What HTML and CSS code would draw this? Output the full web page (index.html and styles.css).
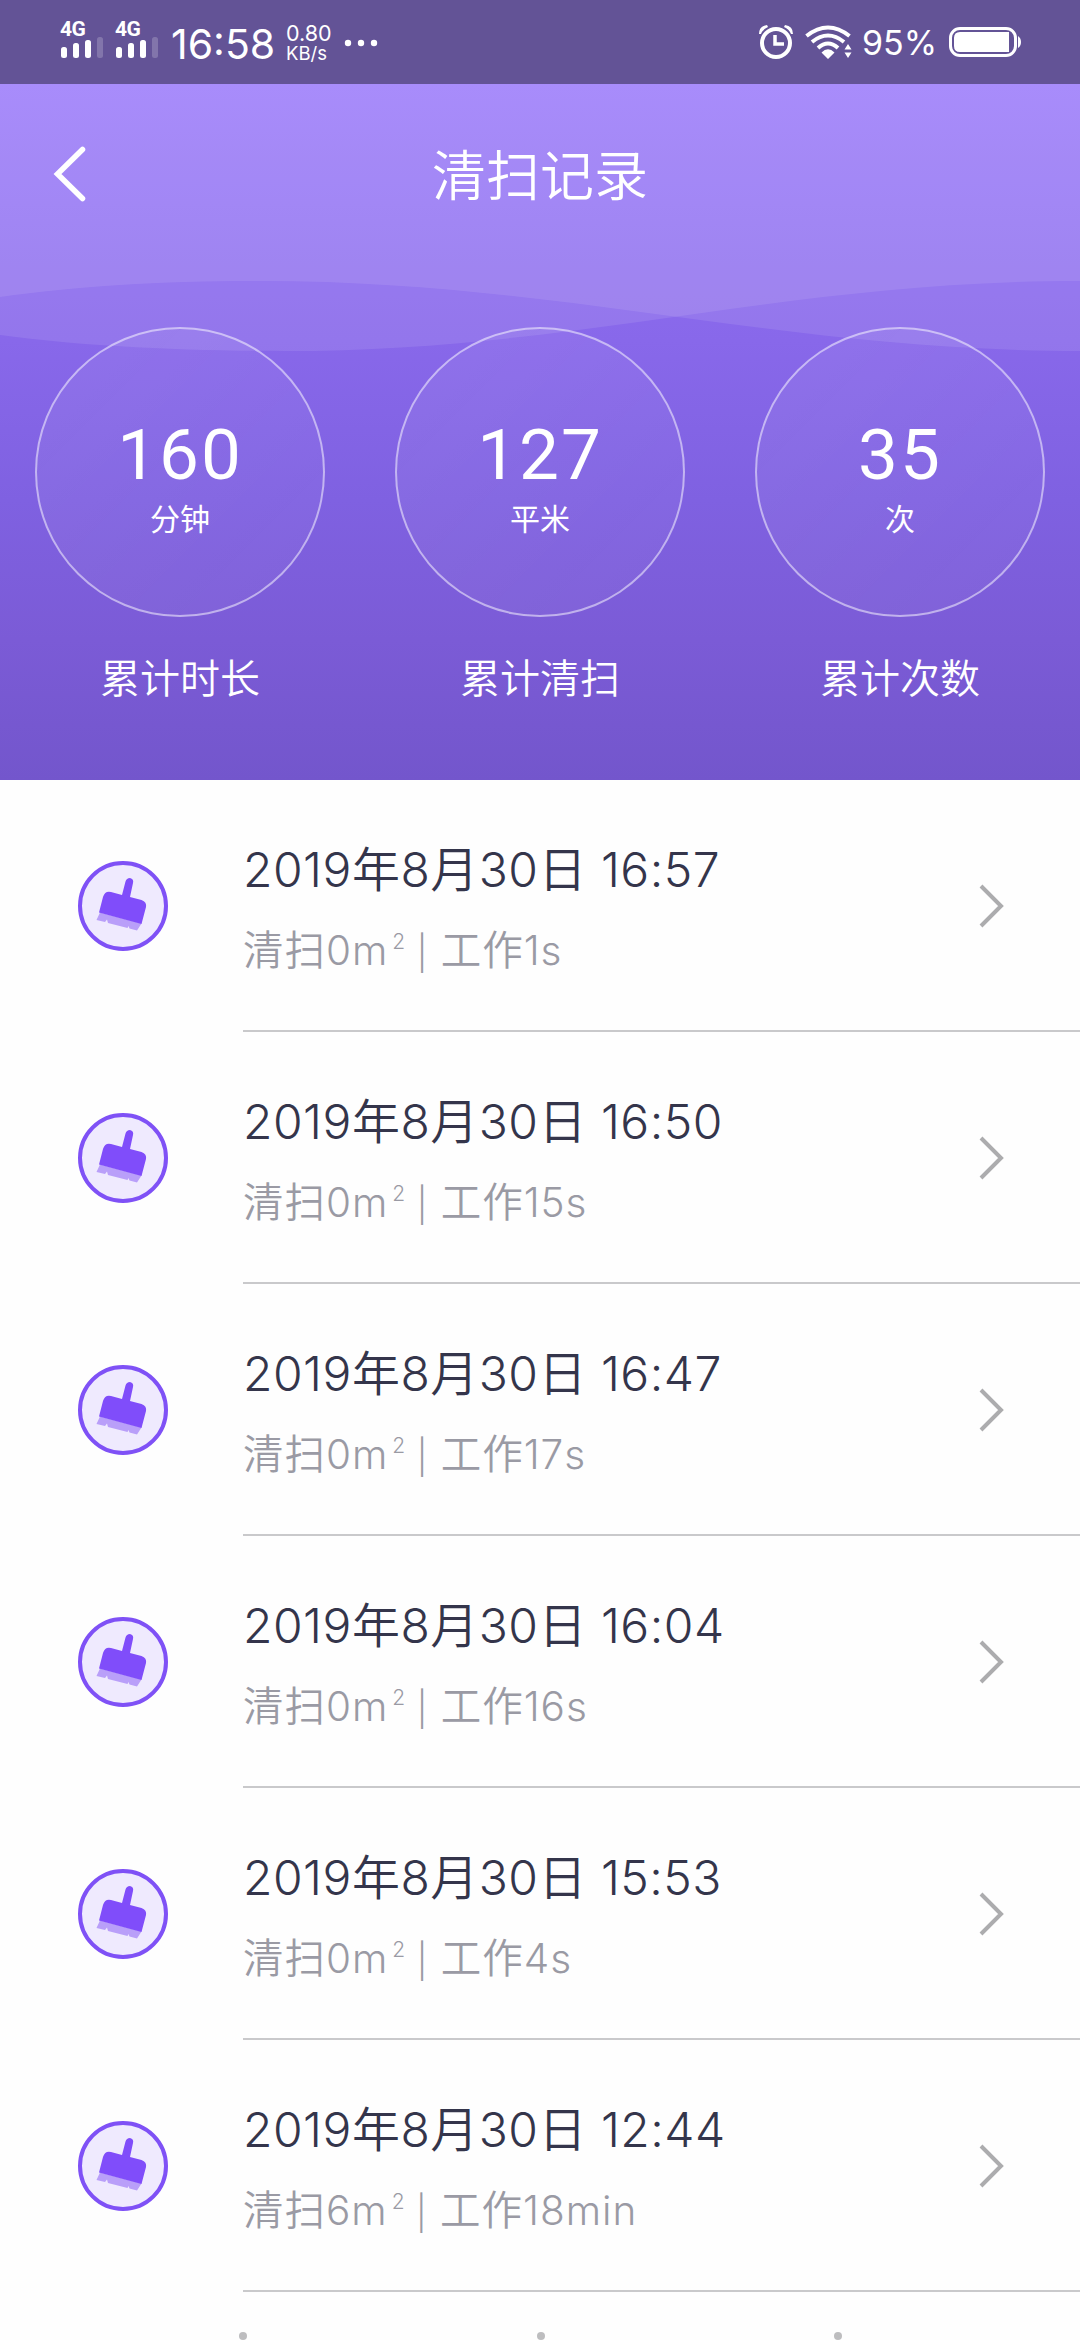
FILE: index.html
```html
<!DOCTYPE html>
<html lang="zh-CN">
<head>
<meta charset="utf-8">
<title>清扫记录</title>
<link rel="stylesheet" href="styles.css">
</head>
<body>
<svg class="defs" width="0" height="0" aria-hidden="true">
  <symbol id="signal" viewBox="0 0 43 21">
    <rect x="0" y="10" width="6" height="11" rx="2.5"/><rect x="12" y="6" width="6" height="15" rx="2.5"/><rect x="24" y="3" width="6" height="18" rx="2.5"/><rect x="36" y="0" width="6" height="21" rx="2.5" opacity=".2"/>
  </symbol>
  <symbol id="brush" viewBox="0 0 90 90">
    <circle cx="45" cy="45" r="43" fill="#efeafe" stroke="#7f51f6" stroke-width="4"/>
    <path d="M22 51.5L63.500 62.500L59 69.500L51.500 67.500L50.500 65L49.500 67L30 62L29 58.500L27 61L18.500 59Z" fill="#b99ff9"/>
    <path d="M21 51.500L25 36Q27 29.500 33 31L44 34L47.500 20.500Q48.500 17 52 17Q56 18 55 22L52 36L63.500 39Q69 41 68 46L63.500 63Z" fill="#804dfa"/>
  </symbol>
  <symbol id="chevron" viewBox="0 0 28 46">
    <path d="M3 3L23 23L3 43" fill="none" stroke="#acacae" stroke-width="4"/>
  </symbol>
</svg>
<header class="hero">
  <svg class="waves" viewBox="0 0 1080 780">
    <path d="M0 0H1080V351C780 351 560 281 262 281C160 281 80 286 0 297Z"/>
    <path d="M0 0H1080V281C780 281 580 351 285 351C180 351 80 346 0 335Z"/>
  </svg>
  <div class="status">
    <div class="sim"><span class="net">4G</span><svg class="bars"><use href="#signal"/></svg></div>
    <div class="sim"><span class="net">4G</span><svg class="bars"><use href="#signal"/></svg></div>
    <span class="time">16:58</span>
    <div class="speed"><span class="rate">0.80</span><span class="rate-unit">KB/s</span></div>
    <svg class="more" viewBox="0 0 34 8"><circle cx="4" cy="4" r="3.200"/><circle cx="17" cy="4" r="3.200"/><circle cx="30" cy="4" r="3.200"/></svg>
    <div class="status-end">
      <svg class="alarm" viewBox="0 0 36 36"><circle cx="18" cy="19" r="14" fill="none" stroke="#fff" stroke-width="4"/><path d="M17 11V20H26" fill="none" stroke="#fff" stroke-width="3.500"/><path d="M1 10Q1 2 9 1L10 3Q5 5 3 10ZM35 10Q35 2 27 1L26 3Q31 5 33 10Z"/></svg>
      <svg class="wifi" viewBox="0 0 48 34"><g fill="none" stroke="#fff" stroke-width="4"><path d="M1.500 11Q23 -6 44.500 11"/><path d="M7 17Q23 4 39 17"/><path d="M13 23Q23 14 33 23"/></g><path d="M16.500 27.500Q23 21 29.500 27.500L23 34ZM43 19L46.500 24.500H39.500ZM43 33L46.500 27.500H39.500Z"/></svg>
      <span class="percent">95%</span>
      <svg class="battery" viewBox="0 0 72 30"><rect x="1.500" y="1.500" width="65" height="27" rx="9.500" fill="none" stroke="#fff" stroke-width="3"/><path d="M11 5H60V25H11Q5 25 5 19V11Q5 5 11 5ZM69 9Q72 11 72 15T69 21Z"/></svg>
    </div>
  </div>
  <div class="navbar">
    <svg class="back" viewBox="0 0 34 56"><path d="M29.500 3.500L4.500 28L29.500 52.500" fill="none" stroke="#fff" stroke-width="5.500" stroke-linecap="round"/></svg>
    <h1 class="title">清扫记录</h1>
  </div>
  <div class="stats">
    <div class="stat"><div class="ring"><span class="num">160</span><span class="unit">分钟</span></div><span class="label">累计时长</span></div>
    <div class="stat"><div class="ring"><span class="num">127</span><span class="unit">平米</span></div><span class="label">累计清扫</span></div>
    <div class="stat"><div class="ring"><span class="num">35</span><span class="unit">次</span></div><span class="label">累计次数</span></div>
  </div>
</header>
<main class="list">
  <div class="row"><svg class="icon"><use href="#brush"/></svg><div class="body"><div class="text"><div class="date">2019年8月30日 16:57</div><div class="info">清扫0m<span class="sq">2</span> <span class="bar">|</span> 工作1s</div></div><svg class="go"><use href="#chevron"/></svg></div></div>
  <div class="row"><svg class="icon"><use href="#brush"/></svg><div class="body"><div class="text"><div class="date">2019年8月30日 16:50</div><div class="info">清扫0m<span class="sq">2</span> <span class="bar">|</span> 工作15s</div></div><svg class="go"><use href="#chevron"/></svg></div></div>
  <div class="row"><svg class="icon"><use href="#brush"/></svg><div class="body"><div class="text"><div class="date">2019年8月30日 16:47</div><div class="info">清扫0m<span class="sq">2</span> <span class="bar">|</span> 工作17s</div></div><svg class="go"><use href="#chevron"/></svg></div></div>
  <div class="row"><svg class="icon"><use href="#brush"/></svg><div class="body"><div class="text"><div class="date">2019年8月30日 16:04</div><div class="info">清扫0m<span class="sq">2</span> <span class="bar">|</span> 工作16s</div></div><svg class="go"><use href="#chevron"/></svg></div></div>
  <div class="row"><svg class="icon"><use href="#brush"/></svg><div class="body"><div class="text"><div class="date">2019年8月30日 15:53</div><div class="info">清扫0m<span class="sq">2</span> <span class="bar">|</span> 工作4s</div></div><svg class="go"><use href="#chevron"/></svg></div></div>
  <div class="row"><svg class="icon"><use href="#brush"/></svg><div class="body"><div class="text"><div class="date">2019年8月30日 12:44</div><div class="info">清扫6m<span class="sq">2</span> <span class="bar">|</span> 工作18min</div></div><svg class="go"><use href="#chevron"/></svg></div></div>
</main>
<footer class="dots"><i class="dot"></i><i class="dot"></i><i class="dot"></i></footer>
</body>
</html>
```
FILE: styles.css
```css
* { box-sizing: border-box; }
body {
  margin: 0;
  width: 1080px;
  height: 2340px;
  overflow: hidden;
  background: #fefefe;
  font-family: Inter, "Noto Sans CJK SC", sans-serif;
}
.defs { position: absolute; }
svg { display: block; fill: #fff; flex: none; }

.hero {
  position: relative;
  height: 780px;
  color: #fff;
  background: linear-gradient(#9573fb 84px, #8868ea 340px, #7f61e1 500px, #7b5bd6 640px, #7356cc 780px);
}
.waves { position: absolute; inset: 0; width: 1080px; height: 780px; }
.waves path { fill: #fff; fill-opacity: .095; }

.status {
  position: relative;
  display: flex;
  align-items: flex-start;
  height: 84px;
  padding: 0 59px 0 60px;
  background: #635396;
}
.sim { display: flex; flex-direction: column; width: 55px; padding-top: 19px; }
.net { font: 700 21px/20px Roboto, sans-serif; letter-spacing: -.5px; }
.bars { width: 43px; height: 21px; margin: -2px 0 0 1px; }
.time { width: 112px; margin: 19px 0 0 1px; font-size: 41px; line-height: 50px; }
.speed { display: flex; flex-direction: column; width: 60px; margin: 23px 0 0 3px; }
.rate { font-size: 21.5px; line-height: 20px; }
.rate-unit { font-size: 18.5px; line-height: 21px; }
.more { width: 34px; height: 8px; margin: 39px 0 0 -2px; }
.status-end { display: flex; align-items: flex-start; margin-left: auto; }
.alarm { width: 36px; height: 36px; margin-top: 24px; }
.wifi { width: 48px; height: 34px; margin: 25px 0 0 11px; }
.percent { width: 87px; margin: 23px 0 0 9px; font-size: 34px; line-height: 40px; }
.battery { width: 72px; height: 30px; margin-top: 27px; }

.navbar {
  position: relative;
  display: grid;
  grid-template-columns: 120px 1fr 120px;
  align-items: center;
  height: 180px;
}
.back { width: 34px; height: 56px; margin-left: 53px; }
.title { margin: 6px 0 0; text-align: center; font-size: 54px; font-weight: 350; line-height: 72px; }

.stats { position: relative; display: grid; grid-template-columns: repeat(3, 360px); padding-top: 63px; }
.stat { display: flex; flex-direction: column; align-items: center; }
.ring {
  display: flex;
  flex-direction: column;
  align-items: center;
  width: 290px;
  height: 290px;
  padding-top: 91px;
  border: 2px solid rgba(255, 255, 255, .5);
  border-radius: 50%;
  background: linear-gradient(135deg, rgba(255, 255, 255, .07), rgba(255, 255, 255, .03));
}
.num { font: 400 71px/70px Roboto, sans-serif; letter-spacing: 2px; }
.unit { margin-top: 9px; font-size: 30px; line-height: 40px; }
.label { margin-top: 37px; font-size: 40px; font-weight: 350; line-height: 50px; }

.row { display: flex; align-items: flex-start; height: 252px; }
.icon { width: 90px; height: 90px; margin: 81px 75px 0 78px; }
.body {
  flex: 1;
  display: flex;
  justify-content: space-between;
  height: 252px;
  padding: 60px 74px 0 0;
  border-bottom: 2px solid #c9c9cb;
}
.date { color: #34354b; font-size: 48px; font-weight: 350; letter-spacing: .5px; line-height: 60px; white-space: nowrap; }
.info { margin-top: 24px; color: #9a9aa4; font-size: 40.5px; font-weight: 350; letter-spacing: 1px; line-height: 54px; white-space: nowrap; }
.sq { margin: 0 -2px 0 4px; font-size: 21px; line-height: 0; vertical-align: 16px; }
.bar { font-size: 34px; line-height: 0; }
.go { width: 28px; height: 46px; margin-top: 43px; }

.dots { display: flex; justify-content: space-between; padding: 40px 238px 0 239px; }
.dot { width: 8px; height: 8px; border-radius: 50%; background: #bdbdbf; }
```
